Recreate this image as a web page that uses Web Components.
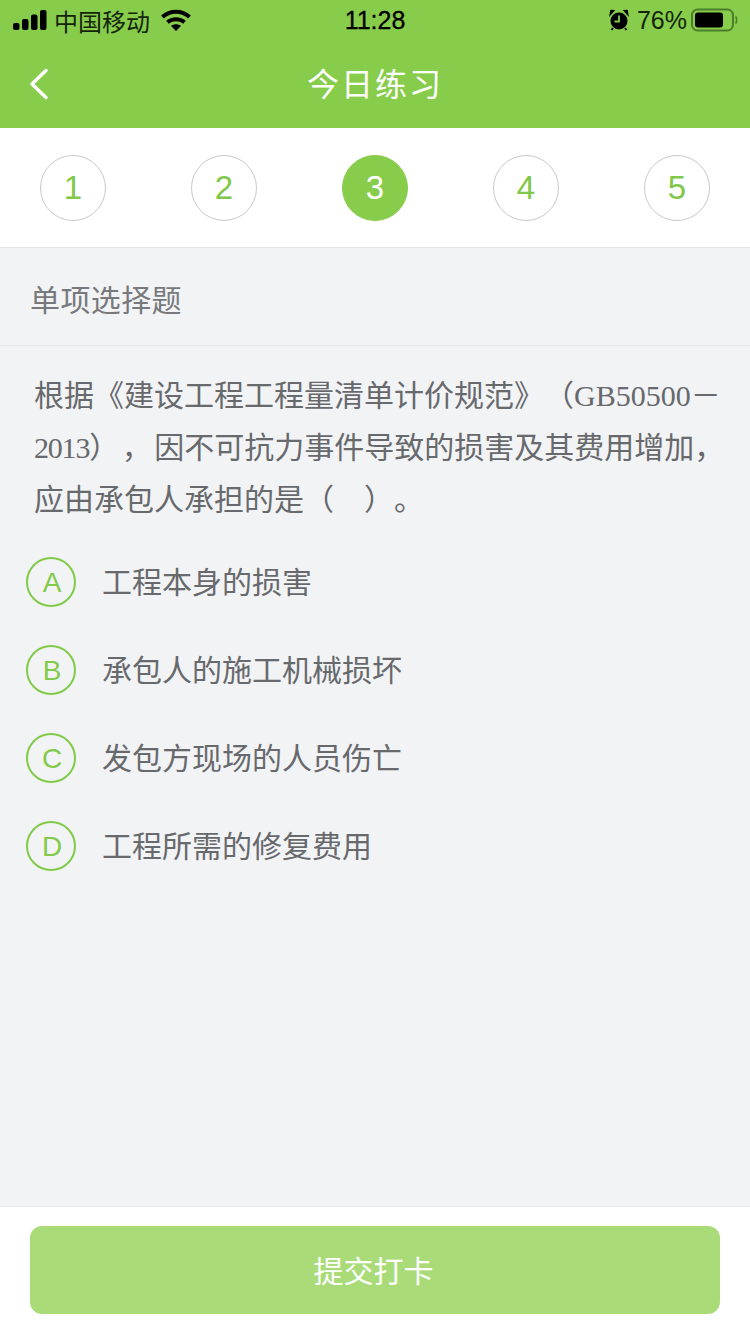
<!DOCTYPE html>
<html lang="zh">
<head>
<meta charset="utf-8">
<title>今日练习</title>
<style>
  html, body { margin: 0; padding: 0; }
  body { width: 750px; height: 1334px; background: #f2f3f5; overflow: hidden;
    font-family: "Liberation Sans", "Noto Sans CJK SC", sans-serif; }
  practice-page { height: 1334px; }
  .num { font-family: "Liberation Serif", "Noto Sans CJK SC", serif; }
  .year { letter-spacing: -1.2px; }
  .close { letter-spacing: 2.5px; }
</style>
</head>
<body>
<practice-page>
  <status-bar slot="status"></status-bar>
  <nav-bar slot="nav">今日练习</nav-bar>
  <step-row slot="steps" current="3" total="5"></step-row>
  <question-type slot="type">单项选择题</question-type>
  <question-text slot="question">根据《建设工程工程量清单计价规范》（<span class="num">GB50500－<br><span class="year">2013</span></span><span class="close">），</span>因不可抗力事件导致的损害及其费用增加，<br>应由承包人承担的是（　）。</question-text>
  <option-item slot="options" letter="A">工程本身的损害</option-item>
  <option-item slot="options" letter="B">承包人的施工机械损坏</option-item>
  <option-item slot="options" letter="C">发包方现场的人员伤亡</option-item>
  <option-item slot="options" letter="D">工程所需的修复费用</option-item>
  <submit-bar slot="footer">提交打卡</submit-bar>
</practice-page>

<script>
/* ── <practice-page> ── */
class PracticePage extends HTMLElement {
  connectedCallback() {
    this.attachShadow({ mode: "open" }).innerHTML = `
      <style>
        :host { display: flex; flex-direction: column; width: 750px; }
        .head { background: #87cd4b; }
        .opts { display: flex; flex-direction: column; padding-top: 12px; flex: 1; }
      </style>
      <div class="head"><slot name="status"></slot><slot name="nav"></slot></div>
      <slot name="steps"></slot>
      <slot name="type"></slot>
      <slot name="question"></slot>
      <div class="opts"><slot name="options"></slot></div>
      <slot name="footer"></slot>`;
  }
}
customElements.define("practice-page", PracticePage);

/* ── <status-bar> ── */
class StatusBar extends HTMLElement {
  connectedCallback() {
    this.attachShadow({ mode: "open" }).innerHTML = `
      <style>
        :host { display: grid; grid-template-columns: 1fr auto 1fr; align-items: center;
          height: 40px; color: #0a1a00; font-size: 24px; }
        .left { display: flex; align-items: center; padding-left: 13px; }
        .carrier { margin-left: 7px; color: #14240a; }
        .wifi { margin-left: 11px; }
        .time { font-size: 25px; color: #000; -webkit-text-stroke: .3px #000; }
        .right { display: flex; align-items: center; justify-content: flex-end; padding-right: 12px; }
        .pct { margin-left: 8px; font-size: 25px; color: #14240a; }
        .batt { margin-left: 4px; }
        svg { display: block; }
      </style>
      <div class="left">
        <svg width="34" height="22" viewBox="0 0 34 22">
          <rect x="0" y="14" width="6.5" height="7" rx="2" fill="#000"/>
          <rect x="9" y="10" width="6.5" height="11" rx="2" fill="#000"/>
          <rect x="18" y="5.5" width="6.5" height="15.5" rx="2" fill="#000"/>
          <rect x="27" y="1" width="6.5" height="20" rx="2" fill="#000"/>
        </svg>
        <span class="carrier">中国移动</span>
        <svg class="wifi" width="30" height="22" viewBox="0 0 30 22" fill="none" stroke="#000" stroke-width="4">
          <path d="M1.5 8 C9 1 21 1 28.5 8"/>
          <path d="M6.5 13.2 C11 9.2 19 9.2 23.5 13.2"/>
          <path d="M15 22 L9.8 16.8 C13 14.6 17 14.6 20.2 16.8 Z" fill="#000" stroke="none"/>
        </svg>
      </div>
      <div class="time">11:28</div>
      <div class="right">
        <svg width="20" height="22" viewBox="0 0 20 22">
          <circle cx="10" cy="12" r="8.5" fill="#000"/>
          <path d="M10 6.5 V12.5 H5.5" fill="none" stroke="#87cd4b" stroke-width="1.8"/>
          <path d="M1 6 L5 1.6 L1.8 1.4 Z M19 6 L15 1.6 L18.2 1.4 Z" fill="#000" stroke="#000" stroke-width="1.2"/>
          <path d="M4 19 L2.5 21 M16 19 L17.5 21" stroke="#000" stroke-width="1.8"/>
        </svg>
        <span class="pct">76%</span>
        <svg class="batt" width="47" height="24" viewBox="0 0 47 24">
          <rect x="1" y="1.5" width="41" height="21" rx="5.5" fill="none" stroke="#4d7f2a" stroke-width="2"/>
          <rect x="4" y="4.5" width="28" height="15" rx="3" fill="#000"/>
          <path d="M44.5 8.5 C46 9.5 46 14.5 44.5 15.5" fill="none" stroke="#4d7f2a" stroke-width="1.6"/>
        </svg>
      </div>`;
  }
}
customElements.define("status-bar", StatusBar);

/* ── <nav-bar> ── */
class NavBar extends HTMLElement {
  connectedCallback() {
    this.attachShadow({ mode: "open" }).innerHTML = `
      <style>
        :host { display: flex; align-items: center; justify-content: center; position: relative;
          height: 88px; color: #fff; font-size: 32px; }
        .title { letter-spacing: 2px; margin-top: -4px; }
        svg { position: absolute; left: 28px; top: 28px; }
      </style>
      <svg width="22" height="32" viewBox="0 0 22 32" fill="none" stroke="#fff" stroke-width="3.4" stroke-linecap="round" stroke-linejoin="round">
        <path d="M18 2.5 L4 16 L18 29.5"/>
      </svg>
      <span class="title"><slot></slot></span>`;
  }
}
customElements.define("nav-bar", NavBar);

/* ── <step-row> ── */
class StepRow extends HTMLElement {
  connectedCallback() {
    const total = +this.getAttribute("total");
    const current = +this.getAttribute("current");
    let steps = "";
    for (let i = 1; i <= total; i++) {
      steps += `<div class="step ${i === current ? "on" : ""}">${i}</div>`;
    }
    this.attachShadow({ mode: "open" }).innerHTML = `
      <style>
        :host { display: flex; justify-content: space-between; align-items: center; box-sizing: border-box;
          height: 120px; padding: 0 40px; background: #fff; border-bottom: 1px solid #e6e6e6; }
        .step { box-sizing: border-box; width: 66px; height: 66px; border-radius: 50%;
          border: 1px solid #c9c9c9; color: #7fc84a; font-size: 33px;
          display: flex; align-items: center; justify-content: center; }
        .step.on { background: #87cd4b; border-color: #87cd4b; color: #fff; }
      </style>
      ${steps}`;
  }
}
customElements.define("step-row", StepRow);

/* ── <question-type> ── */
class QuestionType extends HTMLElement {
  connectedCallback() {
    this.attachShadow({ mode: "open" }).innerHTML = `
      <style>
        :host { display: flex; align-items: center; box-sizing: border-box; height: 98px;
          padding: 3px 31px 0 30px; color: #77797c; font-size: 30px; letter-spacing: .4px;
          border-bottom: 1px solid #e6e7e9; }
      </style>
      <slot></slot>`;
  }
}
customElements.define("question-type", QuestionType);

/* ── <question-text> ── */
class QuestionText extends HTMLElement {
  connectedCallback() {
    this.attachShadow({ mode: "open" }).innerHTML = `
      <style>
        :host { display: block; padding: 24px 20px 0 34px; color: #67696c; font-size: 30px;
          line-height: 52px; white-space: nowrap; text-spacing-trim: space-all; }
      </style>
      <slot></slot>`;
  }
}
customElements.define("question-text", QuestionText);

/* ── <option-item> ── */
class OptionItem extends HTMLElement {
  connectedCallback() {
    this.attachShadow({ mode: "open" }).innerHTML = `
      <style>
        :host { display: flex; align-items: center; height: 88px; padding-left: 26px; color: #67696c; font-size: 30px; }
        .badge { box-sizing: border-box; width: 50px; height: 50px; border-radius: 50%;
          border: 2px solid #82ca4a; color: #82ca4a; font-size: 28px; padding: 1px 0 0 2px;
          display: flex; align-items: center; justify-content: center; margin-right: 26px; }
        .text { margin-bottom: 4px; }
      </style>
      <div class="badge">${this.getAttribute("letter")}</div>
      <span class="text"><slot></slot></span>`;
  }
}
customElements.define("option-item", OptionItem);

/* ── <submit-bar> ── */
class SubmitBar extends HTMLElement {
  connectedCallback() {
    this.attachShadow({ mode: "open" }).innerHTML = `
      <style>
        :host { display: block; box-sizing: border-box; height: 128px; padding: 19px 30px 0;
          background: #fff; border-top: 1px solid #e8e9eb; }
        .btn { box-sizing: border-box; height: 88px; padding: 0 3px 3px 0; border-radius: 12px; background: #a9dc78;
          color: #fff; font-size: 30px; display: flex; align-items: center; justify-content: center; }
      </style>
      <div class="btn"><slot></slot></div>`;
  }
}
customElements.define("submit-bar", SubmitBar);
</script>
</body>
</html>
